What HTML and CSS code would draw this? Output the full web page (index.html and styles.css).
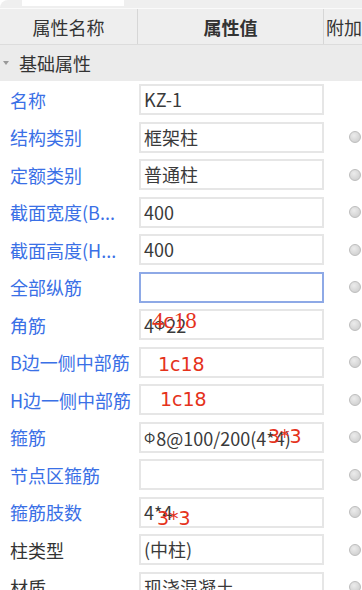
FILE: index.html
```html
<!DOCTYPE html>
<html lang="zh-CN">
<head>
    <meta charset="UTF-8">
    <title>属性列表</title>
    <link rel="stylesheet" href="styles.css">
</head>
<body>
    <div class="panel">
        <div class="topbar"><div class="tab"></div></div>

        <div class="head">
            <div class="head-cell">属性名称</div>
            <div class="head-cell strong">属性值</div>
            <div class="head-cell extra">附加</div>
        </div>

        <div class="section"><span class="caret"></span>基础属性</div>

        <div class="row">
            <div class="name">名称</div>
            <div class="value"><div class="box">KZ-1</div></div>
            <div class="attach"></div>
        </div>
        <div class="row">
            <div class="name">结构类别</div>
            <div class="value"><div class="box">框架柱</div></div>
            <div class="attach"><span class="radio"></span></div>
        </div>
        <div class="row">
            <div class="name">定额类别</div>
            <div class="value"><div class="box">普通柱</div></div>
            <div class="attach"><span class="radio"></span></div>
        </div>
        <div class="row">
            <div class="name">截面宽度(B...</div>
            <div class="value"><div class="box">400</div></div>
            <div class="attach"><span class="radio"></span></div>
        </div>
        <div class="row">
            <div class="name">截面高度(H...</div>
            <div class="value"><div class="box">400</div></div>
            <div class="attach"><span class="radio"></span></div>
        </div>
        <div class="row">
            <div class="name">全部纵筋</div>
            <div class="value"><div class="box focused"></div></div>
            <div class="attach"><span class="radio"></span></div>
        </div>
        <div class="row">
            <div class="name">角筋</div>
            <div class="value"><div class="box">4<span class="bar">Φ</span>22<span class="mark m-corner">4c18</span></div></div>
            <div class="attach"><span class="radio"></span></div>
        </div>
        <div class="row">
            <div class="name">B边一侧中部筋</div>
            <div class="value"><div class="box"><span class="mark m-b">1c18</span></div></div>
            <div class="attach"><span class="radio"></span></div>
        </div>
        <div class="row">
            <div class="name">H边一侧中部筋</div>
            <div class="value"><div class="box"><span class="mark m-h">1c18</span></div></div>
            <div class="attach"><span class="radio"></span></div>
        </div>
        <div class="row">
            <div class="name">箍筋</div>
            <div class="value"><div class="box"><span class="bar">Φ</span>8@100/200(4*4)<span class="mark m-stir">3*3</span></div></div>
            <div class="attach"><span class="radio"></span></div>
        </div>
        <div class="row">
            <div class="name">节点区箍筋</div>
            <div class="value"><div class="box"></div></div>
            <div class="attach"><span class="radio"></span></div>
        </div>
        <div class="row">
            <div class="name">箍筋肢数</div>
            <div class="value"><div class="box">4*4<span class="mark m-legs">3*3</span></div></div>
            <div class="attach"><span class="radio"></span></div>
        </div>
        <div class="row">
            <div class="name plain">柱类型</div>
            <div class="value"><div class="box">(中柱)</div></div>
            <div class="attach"><span class="radio"></span></div>
        </div>
        <div class="row">
            <div class="name plain">材质</div>
            <div class="value"><div class="box">现浇混凝土</div></div>
            <div class="attach"><span class="radio"></span></div>
        </div>
    </div>
</body>
</html>
```

FILE: styles.css
```css
body {
    margin: 0;
    background: #ffffff;
    font-family: "Noto Sans CJK SC", "Noto Sans", sans-serif;
    font-size: 18px;
    color: #333;
    overflow: hidden;
}

.panel {
    width: 362px;
}

.topbar {
    height: 8px;
    background: #efefef;
    border-top-left-radius: 8px;
    border-bottom: 1px solid #fafafa;
}

.tab {
    margin-left: 22px;
    width: 102px;
    height: 6px;
    background: #ffffff;
}

.head {
    display: grid;
    grid-template-columns: 138px 186px 1fr;
    height: 35px;
    background: #eeeeee;
    border-bottom: 1px solid #dcdcdc;
}

.head-cell {
    display: flex;
    align-items: center;
    justify-content: center;
    border-right: 1px solid #d6d6d6;
    white-space: nowrap;
    overflow: hidden;
}

.head-cell.strong {
    font-weight: bold;
}

.head-cell.extra {
    justify-content: flex-start;
    padding-left: 2px;
    border-right: none;
}

.section {
    display: flex;
    align-items: center;
    height: 36px;
    background: #ebebeb;
    padding-left: 19px;
    position: relative;
}

.caret {
    position: absolute;
    left: 3px;
    top: 16px;
    width: 0;
    height: 0;
    border-left: 3px solid transparent;
    border-right: 3px solid transparent;
    border-top: 4px solid #999;
}

.row {
    display: grid;
    grid-template-columns: 139px 185px 1fr;
    height: 37.5px;
    align-items: center;
}

.name {
    padding-left: 10px;
    color: #3a70e6;
    white-space: nowrap;
    overflow: hidden;
}

.name.plain {
    color: #333;
}

.box {
    position: relative;
    box-sizing: border-box;
    height: 31px;
    border: 2px solid #e6e6e6;
    padding-left: 3px;
    line-height: 26px;
    white-space: nowrap;
    color: #3a3a3a;
}

.box.focused {
    border-color: #8ea9e6;
}

.bar {
    font-size: 14px;
    vertical-align: 3px;
    margin-right: 1px;
}

.mark {
    position: absolute;
    color: #e5321b;
    font-family: "DejaVu Sans", sans-serif;
    font-size: 19px;
    line-height: 20px;
}

.m-corner {
    left: 11px;
    top: 0px;
    font-family: "Liberation Serif", serif;
    font-size: 23px;
}

.m-b {
    left: 17px;
    top: 5px;
}

.m-h {
    left: 19px;
    top: 3px;
}

.m-stir {
    left: 127px;
    top: 2px;
}

.m-legs {
    left: 16px;
    top: 9px;
}

.attach {
    display: flex;
    justify-content: flex-end;
    padding-right: 1px;
}

.radio {
    width: 12px;
    height: 12px;
    border-radius: 50%;
    box-sizing: border-box;
    border: 1px solid #bdbdbd;
    background: radial-gradient(circle at 40% 35%, #ececec, #c9c9c9);
}
```
